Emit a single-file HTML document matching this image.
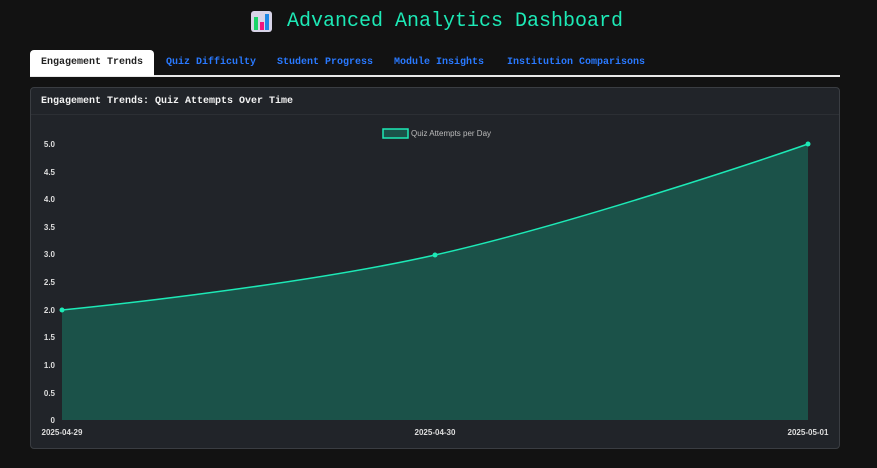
<!DOCTYPE html>
<html><head><style>
*{margin:0;padding:0;box-sizing:border-box}
body{width:877px;height:468px;background:#121212;font-family:"Liberation Mono",monospace;position:relative;overflow:hidden}
.title{position:absolute;top:8px;left:287px;color:#1de9b6;font-size:20px;line-height:28px;white-space:nowrap}
.icon{position:absolute;left:251px;top:11px;width:21px;height:21px;background:#d8d4e8;border-radius:3px}
.tabs{position:absolute;left:30px;top:50px;width:810px;height:27px;border-bottom:2px solid #e8e8e8}
.tab{position:absolute;top:0;height:26px;line-height:26px;font-size:10px;font-weight:bold;color:#2979ff;white-space:nowrap}
.tab.active{background:#fff;color:#222;border-radius:4px 4px 0 0;padding-left:11px;left:0;width:124px}
.card{position:absolute;left:30px;top:87px;width:810px;height:362px;background:#212429;border:1px solid #3a3d42;border-radius:4px}
.hdr{height:27px;border-bottom:1px solid #2c2f34;color:#f2f2f2;font-size:10px;font-weight:bold;line-height:27px;padding-left:10px;white-space:nowrap}
svg{position:absolute;left:0;top:0}
</style></head><body>
<div class="icon">
<div style="position:absolute;left:3px;top:6px;width:4px;height:13px;background:#1bd46a"></div>
<div style="position:absolute;left:8.5px;top:11px;width:4px;height:8px;background:#f0157f"></div>
<div style="position:absolute;left:14px;top:3px;width:4px;height:16px;background:#1e88e5"></div>
</div>
<div class="title">Advanced Analytics Dashboard</div>
<div class="tabs">
<div class="tab active">Engagement Trends</div>
<div class="tab" style="left:136px">Quiz Difficulty</div>
<div class="tab" style="left:247px">Student Progress</div>
<div class="tab" style="left:364px">Module Insights</div>
<div class="tab" style="left:477px">Institution Comparisons</div>
</div>
<div class="card"><div class="hdr">Engagement Trends: Quiz Attempts Over Time</div></div>
<svg width="877" height="468" font-family="Liberation Sans, sans-serif" font-size="8" font-weight="bold">
<rect x="383" y="129" width="25" height="9" fill="#1b5249" stroke="#1de9b6" stroke-width="1.5"/>
<text x="411" y="136" fill="#bbb" font-weight="normal">Quiz Attempts per Day</text>
<path d="M62,310 C62,310 288,288 435,255 C586,221 808,144 808,144 L808,420 L62,420 Z" fill="#1b5249"/>
<path d="M62,310 C62,310 288,288 435,255 C586,221 808,144 808,144" fill="none" stroke="#1de9b6" stroke-width="1.5"/>
<circle cx="62" cy="310" r="2.5" fill="#1de9b6"/>
<circle cx="435" cy="255" r="2.5" fill="#1de9b6"/>
<circle cx="808" cy="144" r="2.5" fill="#1de9b6"/>
<g fill="#ddd" text-anchor="end">
<text x="55" y="147">5.0</text><text x="55" y="175">4.5</text><text x="55" y="202">4.0</text><text x="55" y="230">3.5</text><text x="55" y="257">3.0</text><text x="55" y="285">2.5</text><text x="55" y="313">2.0</text><text x="55" y="340">1.5</text><text x="55" y="368">1.0</text><text x="55" y="396">0.5</text><text x="55" y="423">0</text>
</g>
<g fill="#ddd" text-anchor="middle">
<text x="62" y="435">2025-04-29</text><text x="435" y="435">2025-04-30</text><text x="808" y="435">2025-05-01</text>
</g>
</svg>
</body></html>
